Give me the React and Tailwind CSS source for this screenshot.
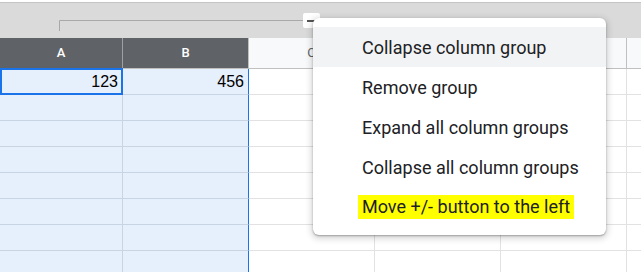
export default function App() {
  const rows = [0, 1, 2, 3, 4, 5, 6, 7];
  return (
    <div className="relative w-[641px] h-[272px] overflow-hidden bg-white" style={{ fontFamily: "Roboto, 'Liberation Sans', sans-serif" }}>
      {/* top strip */}
      <div className="h-[2px] bg-white" />
      <div className="h-px bg-[#c4c4c4]" />
      {/* group bar */}
      <div className="relative h-[35px] bg-[#dadada]">
        <svg className="absolute left-0 top-0" width="320" height="35">
          <path d="M59.5 28 V17.5 H305" stroke="#a9a9a9" strokeWidth="1" fill="none" />
        </svg>
        <div className="absolute left-[303px] top-[10px] w-[17px] h-[15px] rounded-[2px] bg-white flex items-center justify-center">
          <div className="w-[8px] h-[2px] bg-[#555] -ml-[2px]" />
        </div>
      </div>
      {/* header row */}
      <div className="flex h-[31px] border-b border-[#c0c0c0]">
        <div className="w-[123px] shrink-0 bg-[#5f6368] border-r border-[#a0a0a0] flex items-center justify-center text-white text-[13px] font-medium">A</div>
        <div className="w-[126px] shrink-0 bg-[#5f6368] border-r border-[#c0c0c0] flex items-center justify-center text-white text-[13px] font-medium">B</div>
        <div className="w-[126px] shrink-0 bg-[#f8f9fa] border-r border-[#c0c0c0] flex items-center justify-center text-[#5f6368] text-[13px]">C</div>
        <div className="w-[126px] shrink-0 bg-[#f8f9fa] border-r border-[#c0c0c0]" />
        <div className="w-[126px] shrink-0 bg-[#f8f9fa] border-r border-[#c0c0c0]" />
        <div className="flex-1 bg-[#f8f9fa]" />
      </div>
      {/* rows */}
      {rows.map((r) => (
        <div key={r} className="flex h-[26px]" style={{ fontFamily: "'Liberation Sans', Arial, sans-serif" }}>
          <div className="relative w-[123px] shrink-0 bg-[#e6effc] border-r border-b border-[#c9d4e2] flex items-center justify-end pr-[4px] text-[16px] text-black">
            {r === 0 && (
              <>
                <span>123</span>
                <div className="absolute -top-px left-0 -right-px bottom-[-1px] border-2 border-[#1a73e8]" />
              </>
            )}
          </div>
          <div className="w-[126px] shrink-0 bg-[#e6effc] border-r border-r-[#1a73e8] border-b border-b-[#c9d4e2] flex items-center justify-end pr-[4px] text-[16px] text-black">
            {r === 0 && <span>456</span>}
          </div>
          <div className="w-[126px] shrink-0 border-r border-b border-[#e2e2e2]" />
          <div className="w-[126px] shrink-0 border-r border-b border-[#e2e2e2]" />
          <div className="w-[126px] shrink-0 border-r border-b border-[#e2e2e2]" />
          <div className="flex-1 border-b border-[#e2e2e2]" />
        </div>
      ))}
      {/* context menu */}
      <div className="absolute left-[313px] top-[18px] w-[293px] h-[217px] bg-white rounded-[6px] shadow-[0_2px_6px_2px_rgba(0,0,0,0.15),0_1px_2px_rgba(0,0,0,0.3)] py-[9px] text-[18px] text-[#202124]">
        <div className="h-[40px] bg-[#f1f3f4] flex items-center pl-[49px]">Collapse column group</div>
        <div className="h-[40px] flex items-center pl-[49px]">Remove group</div>
        <div className="h-[40px] flex items-center pl-[49px]">Expand all column groups</div>
        <div className="h-[40px] flex items-center pl-[49px]">Collapse all column groups</div>
        <div className="h-[40px] flex items-center pl-[45px]">
          <span className="bg-[#ffff00] px-[4px] leading-[24px]">Move +/- button to the left</span>
        </div>
      </div>
    </div>
  );
}
